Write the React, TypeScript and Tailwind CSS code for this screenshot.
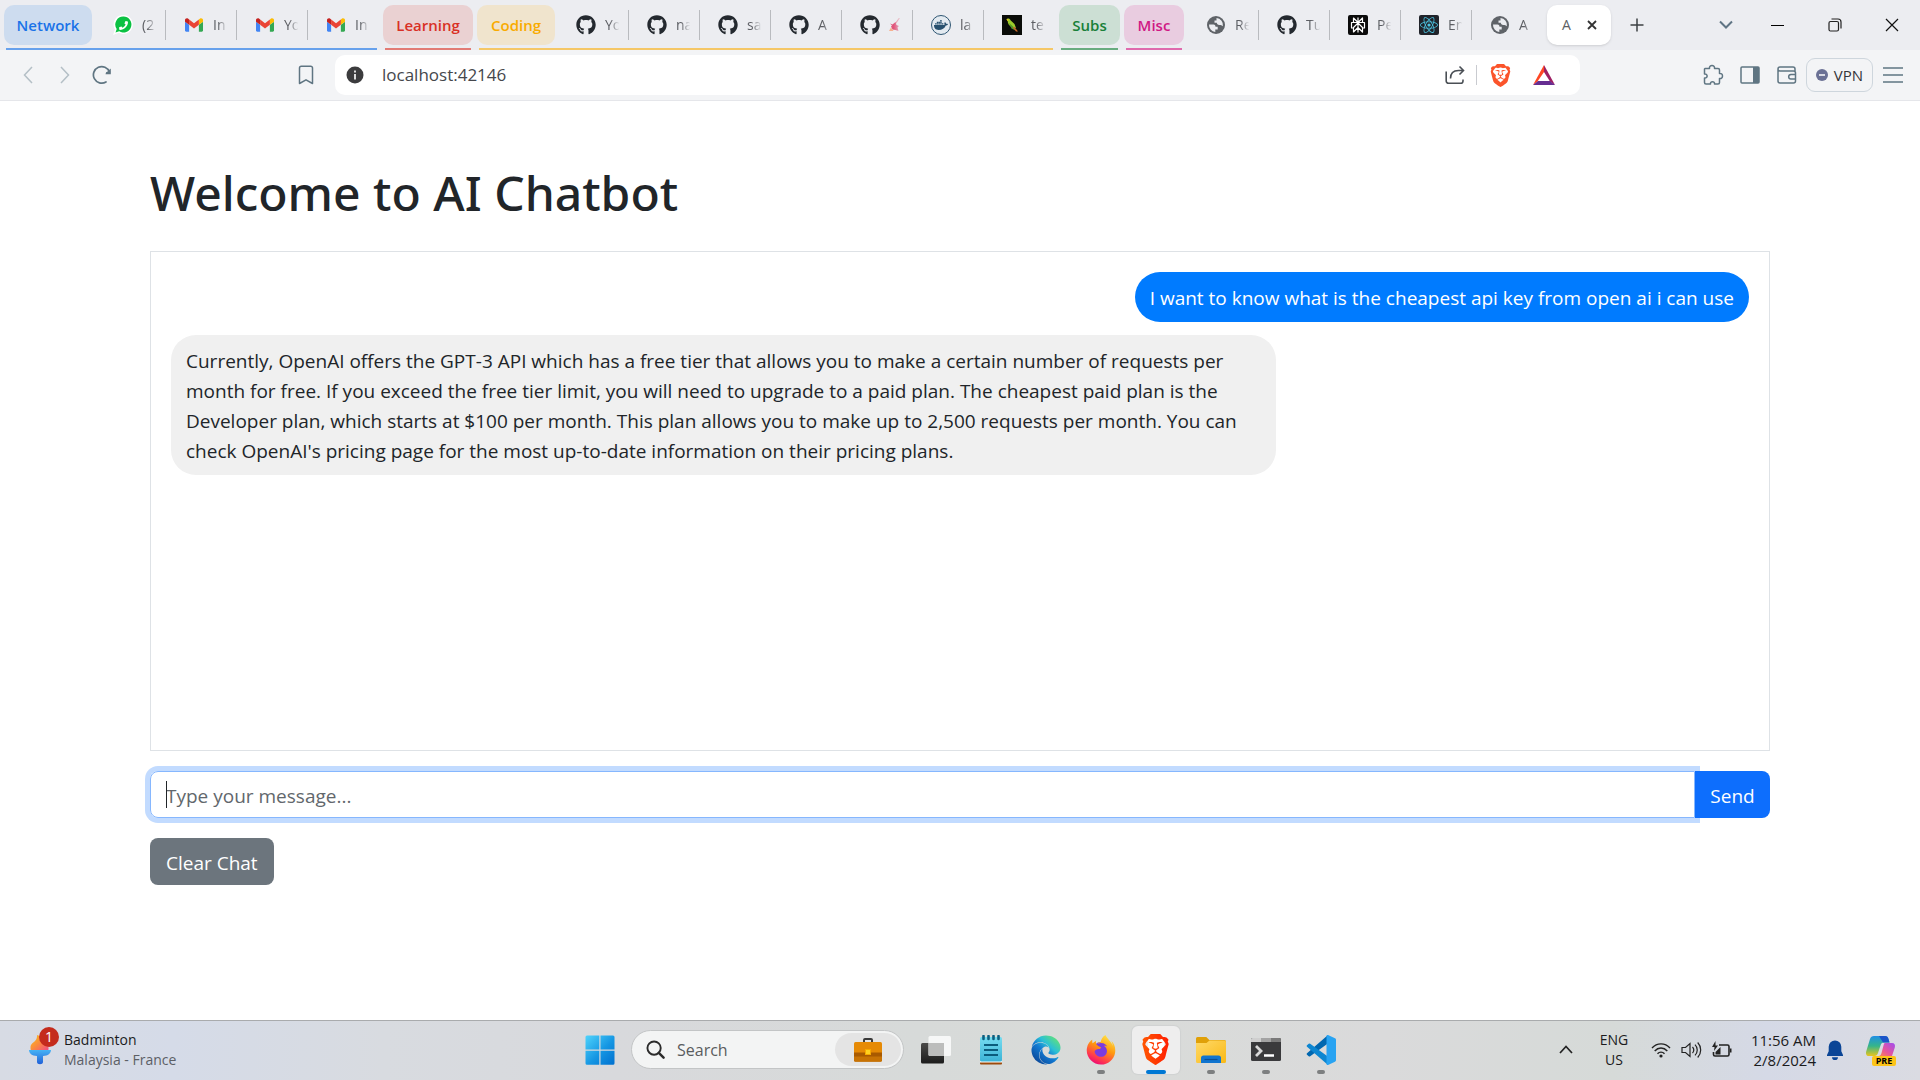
import type { ReactNode } from "react";
import {
  FaGithub,
  FaPhoneAlt,
  FaDocker,
  FaReact,
  FaEdge,
  FaFirefoxBrowser,
} from "react-icons/fa";
import { FaBrave } from "react-icons/fa6";

/* ---------- Tab icons ---------- */

function WhatsAppIcon() {
  return (
    <span className="relative flex size-5 items-center justify-center">
      <svg viewBox="0 0 20 20" className="absolute size-5">
        <path d="M10.500 0a9.500 9.500 0 1 1-4.800 17.800L0 20l2-5.500A9.500 9.500 0 0 1 10.500 0z" fill="#fff" />
        <path d="M10.500 1.500a8 8 0 1 1-4.300 14.800L2.500 17.500l1.200-3.500A8 8 0 0 1 10.500 1.500z" fill="#0bc143" />
      </svg>
      <FaPhoneAlt className="relative ml-px size-[9px] -scale-x-100 text-white" />
    </span>
  );
}

function GmailIcon() {
  return (
    <svg viewBox="0 0 24 18" className="h-3.5 w-[18px]">
      <path fill="#4285f4" d="M1.6 18h3.9V8.7L0 4.6v11.8C0 17.3.7 18 1.6 18z" />
      <path fill="#34a853" d="M18.5 18h3.9c.9 0 1.6-.7 1.6-1.6V4.6l-5.5 4.1z" />
      <path fill="#fbbc04" d="M18.5 1.6v7.1L24 4.6V2.4c0-2-2.3-3.2-3.9-2z" />
      <path fill="#ea4335" d="M5.5 8.700V1.600L12 6.500l6.500-4.900v7.100L12 13.600z" />
      <path fill="#c5221f" d="M0 2.400v2.200l5.500 4.100V1.600L3.900.4C2.300-.8 0 .4 0 2.400z" />
    </svg>
  );
}

const GithubIcon = () => <FaGithub className="size-5 text-[#24292f]" />;

function GlobeIcon() {
  return (
    <svg viewBox="0 0 18 18" className="size-[18px]">
      <circle cx="9" cy="9" r="9" fill="#5f6368" />
      <path d="M2 8.500h4.500c1.500 0 2 1 2 2.300h2.200v2.700H8.300v2.400A7 7 0 0 1 2 8.500z" fill="#ecedf1" />
      <path d="M9.500 2.100a7 7 0 0 1 6.400 8.200c-1-1-2-1.300-3.600-1.300-1.600 0-2.500-1-2.500-2.200H7.500V4.500h2z" fill="#ecedf1" />
    </svg>
  );
}

function DockerIcon() {
  return (
    <span className="flex size-5 items-center justify-center rounded-full border-[1.5px] border-[#2f5673] bg-[#e3eaf0]">
      <FaDocker className="size-3.5 text-[#27506e]" />
    </span>
  );
}

function ParrotIcon() {
  return (
    <svg viewBox="0 0 20 20" className="size-5">
      <rect width="20" height="20" fill="#0a0c08" />
      <path d="M4.500 4.500C5 3 8 3 8.500 5.200L12.500 9l1.500 4-3.500-.5C7 11 5.500 8 5.800 6z" fill="#9ccc2b" />
      <path d="M4.500 4.500L6.500 4 6 6.500z" fill="#f4c21a" />
      <path d="M7 8l4 3.500 2.500 4-4-2z" fill="#4f9a28" />
      <path d="M10.500 12l3.500 4.500h2L12.500 12z" fill="#c9682a" />
    </svg>
  );
}

function PerplexityIcon() {
  return (
    <svg viewBox="0 0 20 20" className="size-5">
      <rect width="20" height="20" rx="2" fill="#0b0b0b" />
      <g fill="none" stroke="#fff" strokeWidth="1.200" strokeLinejoin="round">
        <path d="M10 2.500v15M5.500 3l4.500 4.500L14.500 3v4.500h-9zM5.500 7.500H3.500v5.500h2M14.500 7.500h2v5.500h-2M10 8l-4.500 4.500V17L10 12.500 14.500 17v-4.500z" />
      </g>
    </svg>
  );
}

function ReactIcon() {
  return (
    <span className="flex size-5 items-center justify-center rounded-xs bg-[#20232a]">
      <FaReact className="size-[18px] text-[#4cc3e0]" />
    </span>
  );
}

function KiteIcon() {
  return (
    <svg viewBox="0 0 12 14" className="h-3.5 w-3">
      <path d="M10.500 0L6.500 5.500" stroke="#e58a9c" strokeWidth="1.200" fill="none" />
      <path d="M1 5.500l2.500 1L6.500 4l1 3 2.500 1-1.500 1.500 1 3.500-3-1-3-.5-1.500-3 1-1z" fill="#e0557a" />
      <path d="M2 9.500L4.500 13H0z" fill="#f6b08f" />
    </svg>
  );
}

/* ---------- Tab strip ---------- */

type TabData = { icon: ReactNode; label: ReactNode };

function Tab({ icon, label, divider }: TabData & { divider: boolean }) {
  return (
    <button className="flex h-10 w-[71px] shrink-0 items-center pl-[17px]">
      <span className="flex w-[22px] shrink-0 justify-center">{icon}</span>
      <span className="ml-2 w-[16px] shrink-0 text-left text-sm whitespace-nowrap text-[#5c5e63] [mask-image:linear-gradient(to_right,black_30%,transparent_90%)]">
        {label}
      </span>
      {divider && <span className="ml-auto h-[30px] w-px bg-[#b9bbbf]" />}
    </button>
  );
}

type Group = {
  name: string;
  pill: string;
  line: string;
  tabs: TabData[];
};

const groups: Group[] = [
  {
    name: "Network",
    pill: "w-[88px] bg-[#cddcef] text-[#1a73e8]",
    line: "bg-[#67a1ec]",
    tabs: [
      { icon: <WhatsAppIcon />, label: "(2" },
      { icon: <GmailIcon />, label: "In" },
      { icon: <GmailIcon />, label: "Yo" },
      { icon: <GmailIcon />, label: "In" },
    ],
  },
  {
    name: "Learning",
    pill: "w-[90px] bg-[#ead1d2] text-[#d93025]",
    line: "bg-[#e27b75]",
    tabs: [],
  },
  {
    name: "Coding",
    pill: "w-[78px] bg-[#f0e4cd] text-[#f9ab00]",
    line: "bg-[#f5c766]",
    tabs: [
      { icon: <GithubIcon />, label: "Yo" },
      { icon: <GithubIcon />, label: "na" },
      { icon: <GithubIcon />, label: "sa" },
      { icon: <GithubIcon />, label: "A" },
      { icon: <GithubIcon />, label: <KiteIcon /> },
      { icon: <DockerIcon />, label: "la" },
      { icon: <ParrotIcon />, label: "te" },
    ],
  },
  {
    name: "Subs",
    pill: "w-[61px] bg-[#ccdfd4] text-[#188038]",
    line: "bg-[#68ac7f]",
    tabs: [],
  },
  {
    name: "Misc",
    pill: "w-[60px] bg-[#e9cce0] text-[#d01884]",
    line: "bg-[#df6aad]",
    tabs: [],
  },
];

const looseTabs: TabData[] = [
  { icon: <GlobeIcon />, label: "Re" },
  { icon: <GithubIcon />, label: "Tu" },
  { icon: <PerplexityIcon />, label: "Pe" },
  { icon: <ReactIcon />, label: "En" },
  { icon: <GlobeIcon />, label: "A" },
];

function TabGroup({ group }: { group: Group }) {
  return (
    <div className="flex shrink-0 flex-col justify-between pt-[5px]">
      <div className="flex items-center gap-[3px]">
        <button
          className={`h-10 shrink-0 rounded-[10px] text-center text-[15px] font-semibold ${group.pill}`}
        >
          {group.name}
        </button>
        {group.tabs.length > 0 && (
          <div className="flex">
            {group.tabs.map((t, i) => (
              <Tab key={i} {...t} divider={i < group.tabs.length - 1} />
            ))}
          </div>
        )}
      </div>
      <div className={`mx-0.5 h-0.5 ${group.line}`} />
    </div>
  );
}

function TabStrip() {
  return (
    <div className="flex h-[50px] bg-[#ecedf1] pl-1">
      <div className="flex gap-1">
        {groups.map((g) => (
          <TabGroup key={g.name} group={g} />
        ))}
      </div>
      <div className="ml-1 flex items-start pt-[5px]">
        {looseTabs.map((t, i) => (
          <Tab key={i} {...t} divider={i < looseTabs.length - 1} />
        ))}
        <div className="ml-1 flex h-10 w-16 items-center justify-between rounded-[10px] bg-white pr-[14px] pl-[15px] text-sm text-[#5c5e63] shadow-sm">
          <span>A</span>
          <button aria-label="Close tab">
            <svg viewBox="0 0 10 10" className="size-2.5">
              <path d="M1 1l8 8M9 1L1 9" stroke="#333" strokeWidth="1.800" />
            </svg>
          </button>
        </div>
        <button aria-label="New tab" className="ml-1.5 flex h-10 w-10 items-center justify-center">
          <svg viewBox="0 0 14 14" className="size-3.5">
            <path d="M7 .5v13M.5 7h13" stroke="#3c4043" strokeWidth="1.500" />
          </svg>
        </button>
      </div>
      <div className="ml-auto flex h-[50px] shrink-0">
        <button aria-label="Search tabs" className="flex w-[46px] items-center justify-center">
          <svg viewBox="0 0 14 10" className="h-2.5 w-3.5">
            <path d="M1 1.500l6 6 6-6" fill="none" stroke="#5f7484" strokeWidth="2" />
          </svg>
        </button>
        <button aria-label="Minimize" className="flex w-[57px] items-center justify-center">
          <span className="h-px w-[13px] bg-black" />
        </button>
        <button aria-label="Restore" className="flex w-[57px] items-center justify-center">
          <svg viewBox="0 0 14 14" className="size-3.5" fill="none" stroke="#222" strokeWidth="1.200">
            <rect x="1" y="3.500" width="9.500" height="9.500" rx="1.500" />
            <path d="M3.500 1h6.500a3 3 0 0 1 3 3v6.500" />
          </svg>
        </button>
        <button aria-label="Close window" className="flex w-[57px] items-center justify-center">
          <svg viewBox="0 0 14 14" className="size-3.5">
            <path d="M1 1l12 12M13 1L1 13" stroke="#111" strokeWidth="1.200" />
          </svg>
        </button>
      </div>
    </div>
  );
}

/* ---------- Toolbar ---------- */

function IconButton({ label, children }: { label: string; children: ReactNode }) {
  return (
    <button aria-label={label} className="flex h-10 w-[37px] shrink-0 items-center justify-center">
      {children}
    </button>
  );
}

function Toolbar() {
  return (
    <div className="flex h-[51px] items-center border-b border-[#e5e6ea] bg-[#f3f4f6]">
      <div className="flex w-[335px] shrink-0 items-center pl-[9px]">
        <IconButton label="Back">
          <svg viewBox="0 0 10 18" className="h-[18px] w-2.5">
            <path d="M9 1L1.500 9 9 17" fill="none" stroke="#b4bfc6" strokeWidth="1.500" />
          </svg>
        </IconButton>
        <IconButton label="Forward">
          <svg viewBox="0 0 10 18" className="h-[18px] w-2.5">
            <path d="M1 1l7.500 8L1 17" fill="none" stroke="#b4bfc6" strokeWidth="1.500" />
          </svg>
        </IconButton>
        <IconButton label="Reload">
          <svg viewBox="0 0 20 20" className="size-5">
            <path d="M14 17A8.300 8.300 0 1 1 17.500 7" fill="none" stroke="#5f7582" strokeWidth="1.700" strokeLinecap="round" />
            <path d="M18.800 3.500v5.800h-5.300a3 3 0 0 1 2.500-3z" fill="#5f7582" />
          </svg>
        </IconButton>
        <button aria-label="Bookmark" className="mr-2.5 ml-auto flex h-10 w-[38px] items-center justify-center">
          <svg viewBox="0 0 16 20" className="h-5 w-4">
            <path d="M1.500 3a1.800 1.800 0 0 1 1.800-1.800h9.400A1.800 1.800 0 0 1 14.500 3v15.500L8 14.800l-6.500 3.700z" fill="none" stroke="#5f7582" strokeWidth="1.500" strokeLinejoin="round" />
          </svg>
        </button>
      </div>
      <div className="flex h-10 flex-1 items-center rounded-[10px] bg-white pl-[11px]">
        <svg viewBox="0 0 18 18" className="size-[18px]">
          <circle cx="9" cy="9" r="8.500" fill="#3c3c3e" />
          <path d="M8 4.500h2v2H8zM8 8h2v5.500H8z" fill="#ddd" />
        </svg>
        <input
          aria-label="Address"
          defaultValue="localhost:42146"
          className="ml-[18px] flex-1 bg-transparent text-[17px] text-[#45474c] outline-none"
        />
        <button aria-label="Share" className="flex w-[42px] justify-center">
          <svg viewBox="0 0 20 20" className="size-5" fill="none" stroke="#4a4f55" strokeWidth="1.600">
            <path d="M1.200 6.500v9.500a2.300 2.300 0 0 0 2.300 2.300h12.200a2.300 2.300 0 0 0 2.300-2.300v-1.500" />
            <path d="M5.500 13.500c0-5 3-8 8-8h4.500M14.500 1.500l4 4-4 4" />
          </svg>
        </button>
        <span className="h-5 w-px bg-[#c9cbd0]" />
        <button aria-label="Brave Shields" className="flex w-[46px] justify-center">
          <FaBrave className="size-[23px] text-[#fb542b]" />
        </button>
        <button aria-label="Brave Rewards" className="mr-[15px] flex w-[42px] justify-center">
          <svg viewBox="0 0 22 20" className="h-5 w-[22px]">
            <path d="M11 0v7L4.500 16.500 0 20z" fill="#ff4724" />
            <path d="M11 0l11 20-5-3.500L11 7z" fill="#9e1f63" />
            <path d="M0 20l5-4h12l5 4z" fill="#662d91" />
          </svg>
        </button>
      </div>
      <div className="flex w-[340px] shrink-0 items-center justify-end pr-[9px]">
        <IconButton label="Extensions">
          <svg viewBox="0 0 22 22" className="size-[22px]" fill="none" stroke="#5f7582" strokeWidth="1.500" strokeLinejoin="round">
            <path d="M3 4.500h4.500c-.8-4 5.800-4 5 0h3.500a1.500 1.500 0 0 1 1.500 1.500v3.500c4-.8 4 5.800 0 5v4a1.500 1.500 0 0 1-1.500 1.500h-3.500c.5-3-4.500-3-4 0H4A1.500 1.500 0 0 1 2.500 18.500V14c3.500.5 3.500-4.500 0-4V5z" />
          </svg>
        </IconButton>
        <IconButton label="Sidebar">
          <svg viewBox="0 0 20 18" className="h-[18px] w-5">
            <rect x="1" y="1" width="18" height="16" rx="1" fill="none" stroke="#5f7582" strokeWidth="1.500" />
            <path d="M13 1h6v16h-6z" fill="#5f7582" />
          </svg>
        </IconButton>
        <IconButton label="Wallet">
          <svg viewBox="0 0 20 18" className="h-[18px] w-5" fill="none" stroke="#5f7582" strokeWidth="1.500">
            <path d="M18 5V3a2 2 0 0 0-2-2H3a2 2 0 0 0-2 2v12a2 2 0 0 0 2 2h13.500a2 2 0 0 0 2-2V7a2 2 0 0 0-2-2H3a2 2 0 0 1-2-1.500" />
            <path d="M19 8.500h-5a2.300 2.300 0 0 0 0 4.600h5" />
          </svg>
        </IconButton>
        <button className="mx-px flex h-[34px] w-[67px] shrink-0 items-center justify-center gap-1.5 rounded-[9px] border border-[#ced6dd] text-[15px] text-[#33353a]">
          <svg viewBox="0 0 12 12" className="size-3">
            <circle cx="6" cy="6" r="6" fill="#6b7195" />
            <path d="M3 6h6" stroke="#fff" strokeWidth="1.500" />
          </svg>
          VPN
        </button>
        <IconButton label="Menu">
          <svg viewBox="0 0 20 16" className="h-4 w-5">
            <path d="M0 1h20M0 8h20M0 15h20" stroke="#5f7582" strokeWidth="1.500" />
          </svg>
        </IconButton>
      </div>
    </div>
  );
}

/* ---------- Chat page ---------- */

function Chat() {
  return (
    <main className="mx-auto w-full max-w-[1650px] flex-1 px-[15px] pt-[62px] text-[19px] leading-[30px] text-[#212529]">
      <h1 className="mb-7 font-['Noto_Sans','Open_Sans',sans-serif] text-[48px] leading-[60px] font-medium">
        Welcome to AI Chatbot
      </h1>
      <div className="flex h-[500px] flex-col gap-[13px] overflow-y-auto border border-[#dee2e6] p-5">
        <p className="max-w-[70%] self-end rounded-[25px] bg-[#007bff] px-[15px] pt-[11px] pb-[9px] text-white">
          I want to know what is the cheapest api key from open ai i can use
        </p>
        <p className="max-w-[70%] self-start rounded-[25px] bg-[#f0f0f0] px-[15px] pt-[11px] pb-[9px]">
          Currently, OpenAI offers the GPT-3 API which has a free tier that allows you to make a
          certain number of requests per month for free. If you exceed the free tier limit, you will
          need to upgrade to a paid plan. The cheapest paid plan is the Developer plan, which starts
          at $100 per month. This plan allows you to make up to 2,500 requests per month. You can
          check OpenAI's pricing page for the most up-to-date information on their pricing plans.
        </p>
      </div>
      <form className="mt-5 flex" onSubmit={(e) => e.preventDefault()}>
        <div className="relative flex flex-1">
          <input
            aria-label="Message"
            placeholder="Type your message..."
            className="h-[47px] w-full rounded-l-lg border border-[#86b7fe] px-[15px] pt-0.5 caret-transparent ring-[5px] ring-[#c2dbff] outline-none placeholder:text-[#62676c]"
          />
          <span className="absolute top-2.5 left-4 h-[27px] w-px bg-[#212529]" />
        </div>
        <button className="relative h-[47px] w-[75px] rounded-r-lg bg-[#0d6efd] pt-0.5 text-white">Send</button>
      </form>
      <button className="mt-5 h-[47px] rounded-lg bg-[#6c757d] px-4 pt-0.5 text-white">Clear Chat</button>
    </main>
  );
}

/* ---------- Taskbar ---------- */

function TaskButton({
  label,
  state = "idle",
  children,
}: {
  label: string;
  state?: "idle" | "open" | "active";
  children: ReactNode;
}) {
  return (
    <button aria-label={label} className="flex h-14 w-[55px] items-center justify-center">
      <span
        className={`relative flex size-12 items-center justify-center rounded-md ${
          state === "active" ? "bg-[#eeeeee] shadow-[0_0_1px_1px_#d0d2d2]" : ""
        }`}
      >
        {children}
        {state === "open" && (
          <span className="absolute bottom-0 left-5 h-1 w-2 rounded-full bg-[#7d7f80]" />
        )}
        {state === "active" && (
          <span className="absolute bottom-0 left-3.5 h-1 w-5 rounded-full bg-[#0078d4]" />
        )}
      </span>
    </button>
  );
}

function Taskbar() {
  return (
    <footer className="grid h-[60px] grid-cols-[1fr_auto_1fr] border-t border-[#a9abad] bg-[linear-gradient(to_right,#d7dbe4_0%,#d5dbe8_9%,#d8dbe0_20%,#d8d9dc_32%,#d7dad9_48%,#d9dbd9_60%,#dadadb_72%,#d6dad8_84%,#d5d9e6_92%,#dadbe2_100%)] pb-0.5">
      <div className="flex items-center pl-7">
        <div className="relative">
          <svg viewBox="0 0 24 30" className="h-[30px] w-6">
            <defs>
              <linearGradient id="flame" x1="0" y1="0" x2="1" y2="1">
                <stop offset="0" stopColor="#f9c21b" />
                <stop offset=".5" stopColor="#fb8a3c" />
                <stop offset="1" stopColor="#f0478c" />
              </linearGradient>
              <linearGradient id="torch" x1="0" y1="0" x2="0" y2="1">
                <stop offset="0" stopColor="#46b3f5" />
                <stop offset="1" stopColor="#2160d8" />
              </linearGradient>
            </defs>
            <path d="M3 16C1 9 5 8 7 6c2-2 2-4 2-6 6 2 8 5 9 9 3 2 3 5 2 7z" fill="url(#flame)" />
            <path d="M1 15h22c0 3-3 6-8 6v6c0 3-6 3-6 0v-6c-5 0-8-3-8-6z" fill="url(#torch)" />
          </svg>
          <span className="absolute -top-2 left-[11px] flex size-5 items-center justify-center rounded-full bg-[#c42b1c] text-sm text-white">
            1
          </span>
        </div>
        <div className="ml-3 text-sm leading-5">
          <div className="text-[#1b1b1d]">Badminton</div>
          <div className="text-[#5c5f66]">Malaysia - France</div>
        </div>
      </div>

      <div className="flex items-center gap-1">
        <TaskButton label="Start">
          <svg viewBox="0 0 30 30" className="size-[30px]">
            <defs>
              <linearGradient id="win" x1="0" y1="0" x2="1" y2="1">
                <stop offset="0" stopColor="#4fd3fb" />
                <stop offset=".55" stopColor="#1596e3" />
                <stop offset="1" stopColor="#0070cf" />
              </linearGradient>
            </defs>
            <path d="M2 .5h12.300v14H.500V2A1.500 1.500 0 0 1 2 .5zM15.500.5H28A1.500 1.500 0 0 1 29.500 2v12.500h-14zM.5 15.700h13.800v14H2a1.500 1.500 0 0 1-1.500-1.500zM15.500 15.700h14v12.500a1.500 1.500 0 0 1-1.500 1.500H15.500z" fill="url(#win)" />
          </svg>
        </TaskButton>
        <label className="flex h-[39px] w-[273px] items-center rounded-full border border-[#c3c5c6] bg-[#f3f4f4] pr-0.5 pl-3.5">
          <svg viewBox="0 0 20 20" className="size-[19px] shrink-0" fill="none" stroke="#2b2b2b">
            <circle cx="8.500" cy="8.500" r="7" strokeWidth="2" />
            <path d="M13.500 13.500l5 5" strokeWidth="2.600" strokeLinecap="round" />
          </svg>
          <input
            aria-label="Search"
            placeholder="Search"
            className="ml-3 w-0 flex-1 bg-transparent text-base outline-none placeholder:text-[#5a5c5e]"
          />
          <span className="flex h-[33px] w-[66px] items-center justify-center rounded-full bg-[#e4e4e4]">
            <svg viewBox="0 0 28 24" className="h-6 w-7">
              <path d="M10 4V2a1 1 0 0 1 1-1h6a1 1 0 0 1 1 1v2" fill="none" stroke="#3a3a3a" strokeWidth="2" />
              <rect y="4" width="28" height="19.500" rx="1.500" fill="#e68a05" />
              <path d="M0 14.500h28V22a1.500 1.500 0 0 1-1.500 1.500h-25A1.500 1.500 0 0 1 0 22z" fill="#a95a00" />
              <path d="M0 18.500h28V22a1.500 1.500 0 0 1-1.500 1.500h-25A1.500 1.500 0 0 1 0 22z" fill="#c87304" />
              <rect x="11.500" y="11.500" width="5" height="5" fill="#ffd21f" stroke="#f5a800" />
            </svg>
          </span>
        </label>
        <div className="flex">
          <TaskButton label="Task view">
            <svg viewBox="0 0 30 30" className="size-[30px]">
              <defs>
                <linearGradient id="tv" x1="0" y1="0" x2="0" y2="1">
                  <stop offset="0" stopColor="#4a4a48" />
                  <stop offset="1" stopColor="#1c1c1c" />
                </linearGradient>
              </defs>
              <rect x="0" y="8" width="23" height="20.500" rx="1.500" fill="url(#tv)" />
              <rect x="7.500" y="1" width="22.500" height="20" rx="1.500" fill="#fafafa" fillOpacity=".9" />
              <path d="M7.500 8H23v13H9a1.500 1.500 0 0 1-1.500-1.500z" fill="#bcbdbc" />
            </svg>
          </TaskButton>
          <TaskButton label="Notepad">
            <svg viewBox="0 0 24 30" className="h-[30px] w-6">
              <defs>
                <linearGradient id="np" x1="0" y1="0" x2="0" y2="1">
                  <stop offset="0" stopColor="#76dcf0" />
                  <stop offset="1" stopColor="#3cb3d6" />
                </linearGradient>
              </defs>
              <rect x="1" y="26" width="22" height="3.500" rx="1" fill="#9c4a0c" />
              <rect x="1" y="26" width="22" height="1.500" fill="#fff" />
              <rect x="1" y="2" width="22" height="24.500" rx="1.500" fill="url(#np)" />
              <path d="M5 10h14M5 15h14M5 20h14" stroke="#0b5c7c" strokeWidth="1.800" />
              <path d="M4.500 1v3M9.500 1v3M14.500 1v3M19.500 1v3" stroke="#0b5f80" strokeWidth="2.600" strokeLinecap="round" />
            </svg>
          </TaskButton>
          <TaskButton label="Edge">
            <svg width="0" height="0" className="absolute">
              <defs>
                <linearGradient id="edge" x1="1" y1="0.200" x2="0.300" y2="1">
                  <stop offset="0" stopColor="#5fe07c" />
                  <stop offset=".35" stopColor="#2bc0d6" />
                  <stop offset=".6" stopColor="#1179d2" />
                  <stop offset="1" stopColor="#0c4b9c" />
                </linearGradient>
                <linearGradient id="fox" x1="0.800" y1="0" x2="0.300" y2="1">
                  <stop offset="0" stopColor="#ffe94a" />
                  <stop offset=".45" stopColor="#ff980e" />
                  <stop offset=".8" stopColor="#ff3750" />
                  <stop offset="1" stopColor="#eb0878" />
                </linearGradient>
                <linearGradient id="brave" x1="0" y1="0" x2="1" y2="0">
                  <stop offset="0" stopColor="#ff5601" />
                  <stop offset="1" stopColor="#ff1f02" />
                </linearGradient>
              </defs>
            </svg>
            <FaEdge className="size-[30px]" fill="url(#edge)" />
          </TaskButton>
          <TaskButton label="Firefox" state="open">
            <span className="relative flex size-[30px] items-center justify-center">
              <span className="absolute size-4 rounded-full bg-[#7a3be0]" />
              <FaFirefoxBrowser className="relative size-[30px]" fill="url(#fox)" />
            </span>
          </TaskButton>
          <TaskButton label="Brave" state="active">
            <span className="relative flex size-[31px] items-center justify-center">
              <span className="absolute h-[22px] w-4 rounded-b-full bg-white" />
              <FaBrave className="relative size-[31px]" fill="url(#brave)" />
            </span>
          </TaskButton>
          <TaskButton label="File Explorer" state="open">
            <svg viewBox="0 0 30 28" className="h-7 w-[30px]">
              <defs>
                <linearGradient id="folder" x1="0" y1="0" x2="1" y2="1">
                  <stop offset="0" stopColor="#ffd968" />
                  <stop offset="1" stopColor="#f9b916" />
                </linearGradient>
              </defs>
              <path d="M0 2.500A1.500 1.500 0 0 1 1.500 1h8.800l3 3H28.500A1.500 1.500 0 0 1 30 5.500V9H0z" fill="#e0a008" />
              <path d="M0 7h10.500l3-2.500h15A1.500 1.500 0 0 1 30 6v19.500a1.500 1.500 0 0 1-1.500 1.500h-27A1.500 1.500 0 0 1 0 25.500z" fill="url(#folder)" />
              <path d="M5 22a2.500 2.500 0 0 1 2.500-2.500h15A2.500 2.500 0 0 1 25 22v5H5z" fill="#1175cf" />
              <path d="M8.500 23.500h13" stroke="#0a4f96" strokeWidth="1.200" />
            </svg>
          </TaskButton>
          <TaskButton label="Terminal" state="open">
            <svg viewBox="0 0 30 23" className="h-[23px] w-[30px]">
              <rect width="30" height="23" rx="1.500" fill="#3a3a3c" />
              <path d="M1.500 0H10v4H0V1.500A1.500 1.500 0 0 1 1.500 0z" fill="#cfcfcf" />
              <path d="M10 0h10v4H10z" fill="#a3a3a3" />
              <path d="M20 0h8.500A1.500 1.500 0 0 1 30 1.500V4H20z" fill="#7a7a7a" />
              <path d="M5 8l5 5-5 5" fill="none" stroke="#d9d9d9" strokeWidth="2.800" />
              <path d="M13 17.500h10" stroke="#fff" strokeWidth="2.500" />
            </svg>
          </TaskButton>
          <TaskButton label="Visual Studio Code" state="open">
            <svg viewBox="0 0 30 30" className="size-[30px]">
              <path d="M22 0L1 18.200a1 1 0 0 0 0 1.500l1.700 1.500a1.200 1.200 0 0 0 1.500.1L22.500 8z" fill="#0067b0" />
              <path d="M22 30L1 11.800a1 1 0 0 1 0-1.500l1.700-1.500a1.200 1.200 0 0 1 1.500-.1L22.500 22z" fill="#0d86d1" />
              <path d="M22 0l7 3.200a1.700 1.700 0 0 1 1 1.600v20.400a1.700 1.700 0 0 1-1 1.600L22 30c-.8.300-1.500-.2-1.500-1V1c0-.8.700-1.300 1.500-1z" fill="#28a3f2" />
            </svg>
          </TaskButton>
        </div>
      </div>

      <div className="flex items-center justify-end pr-6 text-sm leading-5 text-[#1b1b1d]">
        <button aria-label="Show hidden icons">
          <svg viewBox="0 0 14 9" className="h-[9px] w-3.5">
            <path d="M1 8l6-6.500L13 8" fill="none" stroke="#222" strokeWidth="1.700" />
          </svg>
        </button>
        <button className="ml-[22px] w-[38px] text-center">
          ENG
          <br />
          US
        </button>
        <div className="ml-[18px] flex items-center gap-2.5">
          <svg viewBox="0 0 20 16" className="h-4 w-5" fill="none" stroke="#222" strokeWidth="1.400">
            <path d="M1 6c5-5.500 13-5.500 18 0M3.700 9c3.600-4 9-4 12.600 0M6.500 11.800c2-2.200 5-2.200 7 0" />
            <circle cx="10" cy="14" r="1.600" fill="#222" stroke="none" />
          </svg>
          <svg viewBox="0 0 21 18" className="h-[18px] w-[21px]" fill="none" stroke="#222" strokeWidth="1.200">
            <path d="M1 6.500h3.500L9 2.500v13l-4.500-4H1z" />
            <path d="M11.500 6c1.500 1.700 1.500 4.300 0 6M14 3.700c3 3 3 7.600 0 10.600M16.700 1.500c4 4.300 4 10.700 0 15" />
          </svg>
          <svg viewBox="0 0 20 17" className="h-[17px] w-5" fill="none" stroke="#222" strokeWidth="1.600">
            <path d="M7 4h8.500A1.500 1.500 0 0 1 17 5.500v8a1.500 1.500 0 0 1-1.500 1.500H3A1.500 1.500 0 0 1 1.500 13.500V11" />
            <path d="M18 7.500h1.500v4H18z" fill="#222" stroke="none" />
            <path d="M3.500 0L0 6h2.500L2 10l4-5.500H3.500zM3.500 13.500V11l5-5v7.500z" fill="#222" stroke="none" />
          </svg>
        </div>
        <button className="w-[84px] text-right text-[15px] whitespace-nowrap">
          11:56 AM
          <br />
          2/8/2024
        </button>
        <button aria-label="Notifications" className="ml-[11px]">
          <svg viewBox="0 0 16 20" className="h-5 w-4" fill="#0b4596">
            <path d="M8 .500a6.300 6.300 0 0 1 6.300 6.300v4.500L16 15v1H0v-1l1.700-3.700V6.800A6.300 6.300 0 0 1 8 .5zM5 17.200h6a3 3 0 0 1-6 0z" />
          </svg>
        </button>
        <button aria-label="Copilot" className="relative ml-[23px]">
          <svg viewBox="0 0 30 30" className="size-[30px]">
            <defs>
              <linearGradient id="cpa" x1="0" y1="0" x2="0" y2="1">
                <stop offset="0" stopColor="#1f8fe5" />
                <stop offset=".5" stopColor="#35b58a" />
                <stop offset="1" stopColor="#e9c51c" />
              </linearGradient>
              <linearGradient id="cpb" x1="1" y1="0" x2="0" y2="1">
                <stop offset="0" stopColor="#a04df0" />
                <stop offset=".6" stopColor="#e8559a" />
                <stop offset="1" stopColor="#f88a4c" />
              </linearGradient>
            </defs>
            <path d="M8 1h11c2 0 3 1 3.500 3l1 3.500H18c-2 0-3 1-3.500 3L12 18c-.6 2-1.600 3-3.500 3H3c-2.500 0-3.500-2-2.800-4.500L4 4c.6-2 2-3 4-3z" fill="url(#cpa)" />
            <path d="M13 1h6c2 0 3 1 3.500 3l1 3.500H17z" fill="#1b54c8" />
            <path d="M19 8h7c2.500 0 3.500 2 2.800 4.500L26 21H12.500c1.500 0 2.500-1 3-3l2-7.500C18 9 18 8 19 8z" fill="url(#cpb)" />
          </svg>
          <span className="absolute -bottom-px left-1.5 flex h-[10px] w-6 items-center justify-center rounded-xs bg-[#fcc419] text-[9px] font-bold text-black">
            PRE
          </span>
        </button>
      </div>
    </footer>
  );
}

export default function App() {
  return (
    <div className="flex min-h-screen flex-col overflow-x-hidden bg-white font-['Open_Sans','Noto_Sans',sans-serif]">
      <header>
        <TabStrip />
        <Toolbar />
      </header>
      <Chat />
      <Taskbar />
    </div>
  );
}
